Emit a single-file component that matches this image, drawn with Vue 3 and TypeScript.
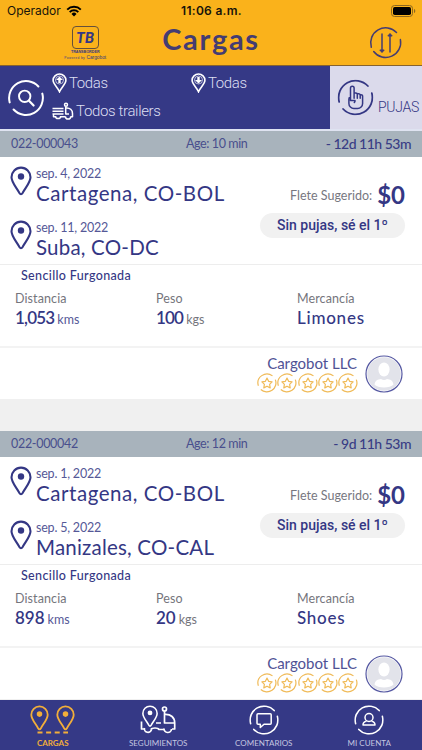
<script setup lang="ts">
interface Stop {
  date: string
  city: string
  size: string
}

interface Load {
  id: string
  age: string
  remaining: string
  stops: Stop[]
  trailer: string
  distance: string
  weight: string
  goods: string
  shipper: string
}

const loads: Load[] = [
  {
    id: '022-000043',
    age: '10 min',
    remaining: '- 12d 11h 53m',
    stops: [
      { date: 'sep. 4, 2022', city: 'Cartagena, CO-BOL', size: 'wide' },
      { date: 'sep. 11, 2022', city: 'Suba, CO-DC', size: 'normal' },
    ],
    trailer: 'Sencillo Furgonada',
    distance: '1,053',
    weight: '100',
    goods: 'Limones',
    shipper: 'Cargobot LLC',
  },
  {
    id: '022-000042',
    age: '12 min',
    remaining: '- 9d 11h 53m',
    stops: [
      { date: 'sep. 1, 2022', city: 'Cartagena, CO-BOL', size: 'wide' },
      { date: 'sep. 5, 2022', city: 'Manizales, CO-CAL', size: 'normal' },
    ],
    trailer: 'Sencillo Furgonada',
    distance: '898',
    weight: '20',
    goods: 'Shoes',
    shipper: 'Cargobot LLC',
  },
]

const isTight = (value: string): boolean => value.startsWith('1')
</script>

<template>
  <div class="screen">
    <svg class="defs" width="0" height="0" aria-hidden="true">
      <symbol id="ring" viewBox="-18 -18 36 36">
        <path d="M-16.3 4.4A16.9 16.9 0 0 1 12.4-11.5M16.3-4.4A16.9 16.9 0 0 1-12.4 11.5" fill="none" stroke="currentColor" stroke-linecap="round" />
      </symbol>
      <symbol id="pin" viewBox="0 0 22 30">
        <path d="M11 28.2C10.2 28.2 9.8 27.6 9.4 26.9C6.600 21.700 1.500 16.400 1.500 11.200A9.500 9.600 0 0 1 20.500 11.200C20.500 16.400 15.400 21.700 12.600 26.900C12.200 27.600 11.800 28.200 11 28.200Z" fill="none" stroke="currentColor" stroke-width="2.100" />
        <circle cx="11" cy="10.500" r="3.200" fill="currentColor" />
      </symbol>
      <symbol id="star" viewBox="-10 -10 20 20">
        <path d="M-8.600 2.800A9 9 0 0 1 5.500-7.100M8.300-3.400A9 9 0 0 1-6.200 6.500" fill="none" stroke="currentColor" stroke-width="1.200" />
        <path d="M0-4.900L1.600-1.700L5.100-1.200L2.600 1.300L3.200 4.900L0 3.200L-3.200 4.900L-2.600 1.300L-5.100-1.200L-1.600-1.700Z" fill="none" stroke="currentColor" stroke-width="1.200" stroke-linejoin="round" />
      </symbol>
    </svg>

    <header class="header">
      <div class="status">
        <div class="carrier">
          <span>Operador</span>
          <svg class="wifi" width="16" height="12" viewBox="0 0 16 12">
            <path d="M1.200 4.600A9.800 9.800 0 0 1 14.800 4.600M3.700 7.100A6.200 6.200 0 0 1 12.300 7.100" fill="none" stroke="#000" stroke-width="2" />
            <path d="M5.500 8.900A3.500 3.500 0 0 1 10.500 8.900L8 11.500Z" />
          </svg>
        </div>
        <span class="clock">11:06 a.m.</span>
        <svg class="battery" width="25" height="12" viewBox="0 0 25 12">
          <rect x=".5" y=".5" width="21" height="11" rx="3" fill="none" stroke="#8c671f" />
          <rect x="2" y="2" width="18" height="8" rx="1.700" />
          <path d="M23 4v4c1.700-.5 1.700-3.500 0-4" fill="#8c671f" />
        </svg>
      </div>
      <div class="titlebar">
        <div class="brand">
          <div class="brand-box">TB</div>
          <div class="brand-name">TRANSBORDER</div>
          <div class="brand-by"><span>Powered by</span> Cargobot</div>
        </div>
        <h1>Cargas</h1>
        <svg class="sort" width="34" height="34" viewBox="-17 -17 34 34">
          <g fill="none" stroke="currentColor" stroke-width="1.500" stroke-linecap="round">
            <path d="M-14.700 4.200A15 15 0 0 1 10.500-10.500M14.400-3.400A15 15 0 0 1-12.300 8.500" />
            <path d="M-4-9V8M4 9V-8" />
          </g>
          <path d="M-6.200 7H-1.800L-4 9.500ZM6.200-7H1.800L4-9.500Z" fill="currentColor" stroke="currentColor" stroke-linejoin="round" />
        </svg>
      </div>
    </header>

    <section class="filters">
      <div class="filter-main">
        <svg class="search" width="38" height="38" viewBox="-19 -19 38 38">
          <use href="#ring" x="-18" y="-18" width="36" height="36" stroke-width="2" />
          <circle cx="-1.300" cy="-1.700" r="5.700" fill="none" stroke="currentColor" stroke-width="1.900" />
          <path d="M3 2.700L7.600 7.500" stroke="currentColor" stroke-width="2.200" stroke-linecap="round" />
        </svg>
        <div class="chips">
          <div v-for="way in ['up', 'down']" :key="way" class="chip">
            <svg width="15" height="20" viewBox="0 0 15 20">
              <path d="M7.500 18.800C5.800 14.500 1.100 11.200 1.100 7.300A6.400 6.300 0 0 1 13.900 7.300C13.900 11.200 9.200 14.500 7.500 18.800Z" fill="none" stroke="currentColor" stroke-width="1.600" />
              <circle cx="7.500" cy="7" r="4" fill="none" stroke="currentColor" stroke-width=".8" opacity=".8" />
              <path :d="way === 'up' ? 'M7.500 3.500L11 7H8.700V10H6.300V7H4Z' : 'M7.500 10.500L4 7H6.300V4H8.700V7H11Z'" fill="currentColor" />
            </svg>
            <span>Todas</span>
          </div>
          <div class="chip trailers">
            <svg width="22" height="18" viewBox="0 0 22 18">
              <g fill="none" stroke="currentColor" stroke-width="1.500" stroke-linejoin="round">
                <path d="M.5 6.500H11.500M.5 9.300H11.500M.5 12.100H11.500M13.700 12.500V4.500M13.700 6C18 5.500 20.500 8 20.500 11.500V14.700H18.500M9 14.700H13.500M1.500 12.500V14.700H3.500" />
                <path d="M13.700 12H17" />
                <path d="M3.500 14A2.600 2.600 0 0 0 8.700 14M13.500 14.500A2.600 2.600 0 0 0 18.700 14.500" />
                <circle cx="14" cy="2.700" r="1.500" />
              </g>
            </svg>
            <span>Todos trailers</span>
          </div>
        </div>
      </div>
      <div class="bids">
        <svg width="37" height="37" viewBox="-18.500 -18.500 37 37">
          <use href="#ring" x="-18" y="-18" width="36" height="36" stroke-width="1.800" />
          <path d="M-5 3V-9.400A1.800 1.800 0 0 1-1.400-9.400V.8M-1.400-4.600H.4A1.500 1.500 0 0 1 1.800-3.200V.8M1.800-3.800H3.400A1.500 1.500 0 0 1 4.700-2.400V.8M4.700-2.800H5.600A1.500 1.500 0 0 1 7.100-1.300V6A5 5 0 0 1 2.100 11H-1.500A5 5 0 0 1-6.600 6V1.500A2 2 0 0 1-5-.4M-5 3H-.5A2.400 2.400 0 0 1-1.200 5" fill="none" stroke="currentColor" stroke-width="1.500" stroke-linejoin="round" stroke-linecap="round" />
        </svg>
        <span>PUJAS</span>
      </div>
    </section>

    <main class="loads">
      <article v-for="load in loads" :key="load.id" class="load">
        <div class="load-head">
          <span class="load-id">{{ load.id }}</span>
          <span class="age">Age: {{ load.age }}</span>
          <span class="remaining">{{ load.remaining }}</span>
        </div>
        <div class="route">
          <div class="stops">
            <div v-for="stop in load.stops" :key="stop.date" class="stop">
              <svg width="22" height="30"><use href="#pin" width="22" height="30" /></svg>
              <div>
                <div class="date">{{ stop.date }}</div>
                <div class="city" :class="stop.size">{{ stop.city }}</div>
              </div>
            </div>
          </div>
          <div class="offer">
            <div class="price"><span>Flete Sugerido:</span><b>$0</b></div>
            <div class="pill">Sin pujas, sé el 1º</div>
          </div>
        </div>
        <div class="details">
          <div class="trailer">{{ load.trailer }}</div>
          <div class="facts">
            <div class="fact">
              <div class="label">Distancia</div>
              <div class="value"><b :class="{ tight: isTight(load.distance) }">{{ load.distance }}</b><span class="kms">kms</span></div>
            </div>
            <div class="fact">
              <div class="label">Peso</div>
              <div class="value"><b :class="{ tight: isTight(load.weight) }">{{ load.weight }}</b><span>kgs</span></div>
            </div>
            <div class="fact">
              <div class="label">Mercancía</div>
              <div class="value goods"><b>{{ load.goods }}</b></div>
            </div>
          </div>
        </div>
        <div class="shipper">
          <div class="rating">
            <div class="shipper-name">{{ load.shipper }}</div>
            <div class="stars">
              <svg v-for="n in 5" :key="n" width="20" height="20"><use href="#star" width="20" height="20" /></svg>
            </div>
          </div>
          <svg class="avatar" width="38" height="38" viewBox="0 0 38 38">
            <circle cx="19" cy="19" r="18" fill="#fff" stroke="#5558a2" stroke-width="1.200" />
            <circle cx="19" cy="19" r="16.800" fill="#e2e3ea" />
            <ellipse cx="19" cy="14.500" rx="5.600" ry="7" fill="#fff" />
            <path d="M9.500 29.500C10 25.500 13 24.300 16 24Q19 26 22 24C25 24.300 28 25.500 28.500 29.500C25.500 33.500 12.500 33.500 9.500 29.500Z" fill="#fff" />
          </svg>
        </div>
      </article>
    </main>

    <nav class="tabs">
      <div class="tab active">
        <svg width="46" height="30" viewBox="0 0 46 30">
          <use href="#pin" x="0" y="0" width="19" height="26" />
          <use href="#pin" x="26" y="0" width="19" height="26" />
          <path d="M7.500 27.500H38" stroke="currentColor" stroke-width="1.800" stroke-dasharray="5 3.600" />
        </svg>
        <span>CARGAS</span>
      </div>
      <div class="tab seguimientos">
        <svg width="36" height="30" viewBox="0 0 36 30">
          <use href="#pin" x="1.500" y="0" width="17" height="22.500" />
          <g fill="none" stroke="currentColor" stroke-width="1.700" stroke-linejoin="round">
            <path d="M1.500 16.500V24H5M11 24.500C12 22.500 18 22.500 19 24.500H24M24.500 6V18H35M24.500 9.500C31 9 34.700 12.500 34.700 18V24H32M16 18H21" />
            <path d="M4.500 23A3.500 3.500 0 0 0 11.500 24.500M24 23.500A3.700 3.700 0 0 0 31.500 24" />
            <circle cx="24.500" cy="4" r="2" />
          </g>
        </svg>
        <span>SEGUIMIENTOS</span>
      </div>
      <div class="tab comentarios">
        <svg width="30" height="30" viewBox="-15 -15 30 30">
          <use href="#ring" x="-14.800" y="-14.800" width="29.600" height="29.600" stroke-width="2" />
          <path d="M-6-6.200H6.200Q7.200-6.200 7.200-5.200V3.200Q7.200 4.200 6.200 4.200H0L-3.700 7.500V4.200H-6Q-7 4.200-7 3.200V-5.200Q-7-6.200-6-6.200Z" fill="none" stroke="currentColor" stroke-width="1.500" stroke-linejoin="round" />
        </svg>
        <span>COMENTARIOS</span>
      </div>
      <div class="tab cuenta">
        <svg width="30" height="30" viewBox="-15 -15 30 30">
          <use href="#ring" x="-14.800" y="-14.800" width="29.600" height="29.600" stroke-width="2" />
          <circle cx="0" cy="-2.500" r="4" fill="none" stroke="currentColor" stroke-width="1.500" />
          <path d="M-2.500 1.200C-5 1.500-6 3-6 5H6C6 3 5 1.500 2.500 1.200" fill="none" stroke="currentColor" stroke-width="1.500" stroke-linejoin="round" />
        </svg>
        <span>MI CUENTA</span>
      </div>
    </nav>
  </div>
</template>

<style>
body {
  background: #f0f0f0;
  overflow: hidden;
}
</style>

<style scoped>
.screen {
  display: flex;
  flex-direction: column;
  width: 422px;
  height: 750px;
  overflow: hidden;
  box-sizing: border-box;
  color: #343784;
  font-family: Lato, sans-serif;
  white-space: nowrap;
}

.screen * {
  box-sizing: border-box;
}

.defs {
  position: absolute;
}

.screen svg {
  display: block;
  flex: none;
}

.header {
  flex: none;
  height: 66px;
  background: #fab21b;
  border-bottom: 1px solid #86622f;
}

.status {
  display: grid;
  grid-template-columns: 1fr auto 1fr;
  align-items: center;
  height: 22px;
  padding: 0 6px 0 7px;
  color: #17130a;
  font: 12px/22px Inter, sans-serif;
}

.carrier {
  display: flex;
  gap: 5px;
  align-items: center;
}

.clock {
  font-weight: 600;
  letter-spacing: 0.3px;
}

.battery {
  justify-self: end;
}

.titlebar {
  display: grid;
  grid-template-columns: 1fr auto 1fr;
  height: 43px;
}

.brand {
  display: flex;
  flex-direction: column;
  align-items: center;
  justify-self: end;
  width: 46px;
  margin: 4px 54px 0 0;
}

.brand-box {
  width: 27px;
  height: 23px;
  border: 1px solid #65503b;
  border-radius: 4px;
  text-align: center;
  font: italic 900 15px/21px Lato, sans-serif;
}

.brand-name {
  margin-top: 1px;
  font: 700 3.7px/5px "Liberation Sans", sans-serif;
}

.brand-by {
  font: 4.8px/6px "Liberation Sans", sans-serif;
}

.brand-by span {
  font-size: 3.2px;
  letter-spacing: 0.4px;
}

h1 {
  margin: -1px 0 0;
  font-size: 29px;
  font-weight: 700;
  line-height: 36px;
  color: #443c72;
  letter-spacing: 1.7px;
}

.sort {
  justify-self: end;
  margin: 4px 19px 0 0;
  color: #443c72;
}

.filters {
  display: flex;
  flex: none;
  height: 65px;
  border-bottom: 2px solid #dfe3f1;
}

.filter-main {
  display: flex;
  width: 330px;
  background: #353986;
  color: #fff;
}

.search {
  margin: 12.5px 0 0 7px;
}

.chips {
  display: grid;
  grid-template-columns: 139px 1fr;
  grid-template-rows: 29px 28px;
  flex: 1;
  padding: 2px 0 0 7px;
}

.chip {
  display: flex;
  gap: 2px;
  align-items: center;
  font: 300 15px/20px Roboto, sans-serif;
}

.chip span {
  color: #dddff2;
  letter-spacing: -0.4px;
}

.trailers {
  grid-column: 1 / -1;
}

.trailers span {
  letter-spacing: -0.35px;
}

.bids {
  display: flex;
  flex: 1;
  gap: 4px;
  padding: 13px 0 0 7px;
  background: #dbdaeb;
}

.bids span {
  padding-top: 18px;
  font: 300 14px/20px Roboto, sans-serif;
  letter-spacing: -0.3px;
}

.loads {
  flex: none;
  height: 569px;
  overflow: hidden;
}

.load {
  height: 268px;
  margin-bottom: 32px;
  background: #fff;
}

.load-head {
  display: grid;
  grid-template-columns: 175px auto 1fr;
  height: 26px;
  padding: 0 11px;
  background: #a8b3bc;
  color: #494f8d;
  font-size: 12.5px;
  line-height: 25px;
}

.load-id {
  letter-spacing: -0.3px;
}

.age {
  letter-spacing: -0.4px;
}

.remaining {
  justify-self: end;
  color: #393d85;
  font-size: 14px;
  font-weight: 500;
  letter-spacing: -0.5px;
}

.route {
  display: flex;
  justify-content: space-between;
  height: 108px;
  padding: 9px 17px 0 10px;
  border-bottom: 1px solid #ededed;
}

.stop {
  display: flex;
  gap: 4px;
  height: 53.500px;
}

.date {
  height: 16px;
  color: #555897;
  font-size: 12.5px;
  line-height: 15px;
  letter-spacing: -0.2px;
}

.city {
  margin-top: -1px;
  font-size: 20.500px;
  line-height: 24px;
}

.city.wide {
  letter-spacing: 0.55px;
}

.city.normal {
  letter-spacing: 0.2px;
}

.offer {
  display: flex;
  flex-direction: column;
  align-items: flex-end;
  padding-top: 16px;
}

.price {
  display: flex;
  gap: 5px;
  align-items: center;
  height: 26px;
  color: #77777f;
  font-size: 12.5px;
}

.price b {
  color: #343784;
  font-size: 24px;
  line-height: 26px;
}

.pill {
  width: 145px;
  height: 25px;
  margin-top: 5px;
  border-radius: 13px;
  background: #f1f1f1;
  text-align: center;
  font: 500 14px/25px Roboto, sans-serif;
}

.details {
  height: 83px;
  padding: 3px 15px 0;
  border-bottom: 2px solid #f3f3f3;
}

.trailer {
  height: 15px;
  padding-left: 6px;
  font-size: 12.5px;
  font-weight: 500;
  line-height: 15px;
  letter-spacing: 0.35px;
}

.facts {
  display: grid;
  grid-template-columns: 141px 141px 1fr;
  padding-top: 8px;
}

.label {
  color: #75757c;
  font-size: 12.5px;
  line-height: 16px;
  letter-spacing: 0.1px;
}

.value {
  display: flex;
  align-items: baseline;
  gap: 3px;
  height: 22px;
  font-size: 12.5px;
  line-height: 22px;
  color: #75757c;
}

.value b {
  color: #343784;
  font-size: 17px;
  font-weight: 600;
}

.value b.tight {
  letter-spacing: -0.8px;
}

.value .kms {
  color: #555897;
}

.value.goods b {
  font-weight: 500;
  letter-spacing: 0.75px;
}

.shipper {
  display: flex;
  justify-content: flex-end;
  gap: 7px;
  height: 51px;
  padding: 7px 19px 0 0;
}

.rating {
  display: flex;
  flex-direction: column;
  align-items: flex-end;
}

.shipper-name {
  height: 18px;
  padding-right: 1px;
  color: #4f5295;
  font-size: 15px;
  line-height: 17px;
}

.stars {
  display: flex;
  gap: 0.200px;
  color: #f0bb59;
}

.tabs {
  display: grid;
  grid-template-columns: repeat(4, 1fr);
  flex: none;
  height: 50px;
  background: #353986;
  color: #fff;
}

.tab {
  display: flex;
  flex-direction: column;
  align-items: center;
  padding-top: 5px;
}

.tab span {
  color: #c5c6e0;
  font-size: 8px;
  line-height: 16px;
}

.tab.active,
.tab.active span {
  color: #f2ae3a;
}

.tab.active span {
  font-weight: 700;
}
</style>
